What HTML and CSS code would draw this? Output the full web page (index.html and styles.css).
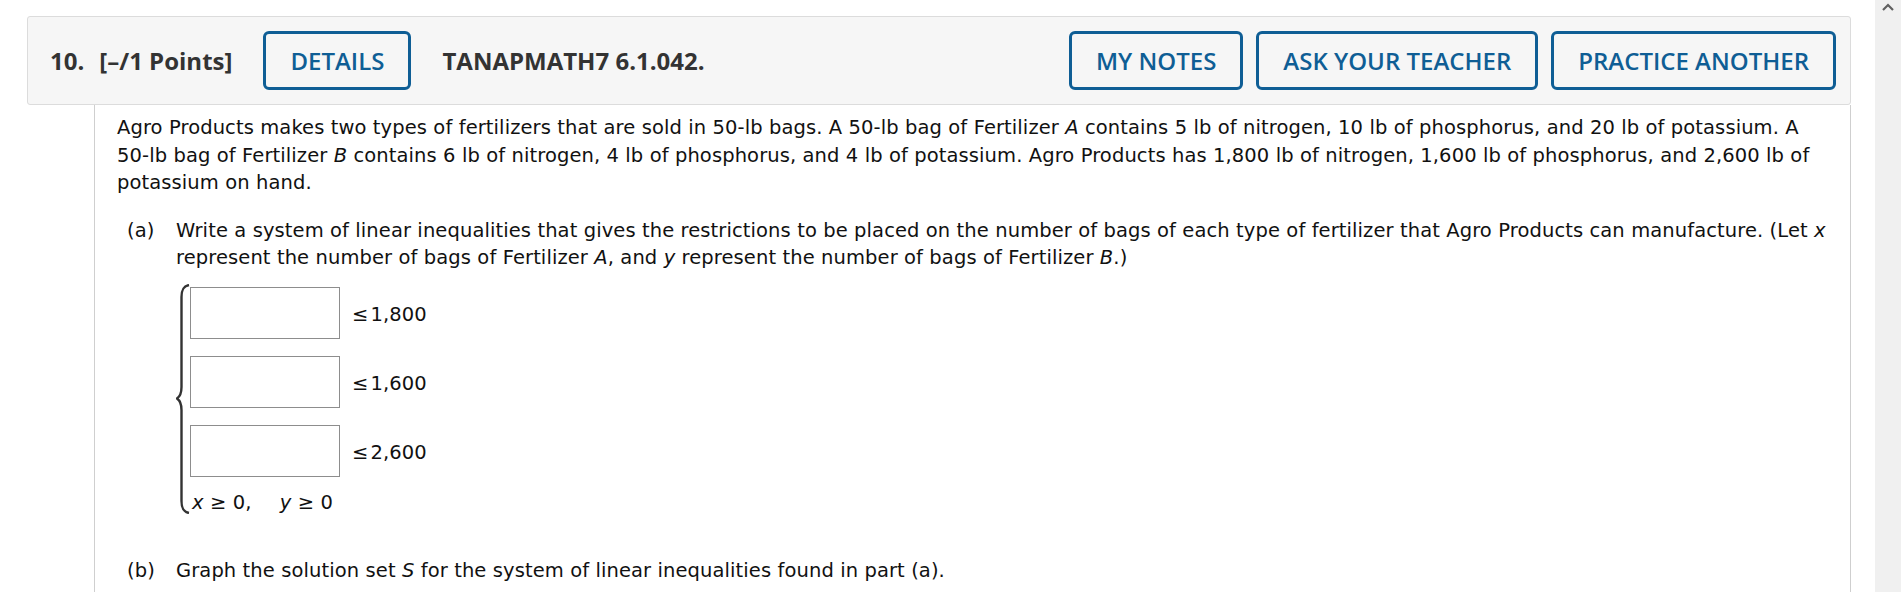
FILE: index.html
```html
<!DOCTYPE html>
<html lang="en">

<head>
    <meta charset="UTF-8">
    <meta name="viewport" content="width=device-width, initial-scale=1.0">
    <title>Question 10</title>
    <link rel="stylesheet" href="styles.css">
</head>

<body>
    <div class="page">
        <div class="qhead">
            <span class="qnum">10.</span>
            <span class="points">[&ndash;/1 Points]</span>
            <button class="qbtn details">DETAILS</button>
            <span class="qcode">TANAPMATH7 6.1.042.</span>
            <div class="qtools">
                <button class="qbtn">MY NOTES</button>
                <button class="qbtn">ASK YOUR TEACHER</button>
                <button class="qbtn">PRACTICE ANOTHER</button>
            </div>
        </div>

        <div class="qbody">
            <p class="intro">Agro Products makes two types of fertilizers that are sold in 50-lb bags. A 50-lb bag of Fertilizer <i>A</i> contains 5 lb of nitrogen, 10 lb of phosphorus, and 20 lb of potassium. A 50-lb bag of Fertilizer <i>B</i> contains 6 lb of nitrogen, 4 lb of phosphorus, and 4 lb of potassium. Agro Products has 1,800 lb of nitrogen, 1,600 lb of phosphorus, and 2,600 lb of potassium on hand.</p>

            <div class="part">
                <span class="plabel">(a)</span>
                <div class="ptext">
                    <p>Write a system of linear inequalities that gives the restrictions to be placed on the number of bags of each type of fertilizer that Agro Products can manufacture. (Let <i>x</i> represent the number of bags of Fertilizer <i>A</i>, and <i>y</i> represent the number of bags of Fertilizer <i>B</i>.)</p>

                    <div class="system">
                        <svg class="brace" viewBox="0 0 14 230" preserveAspectRatio="none">
                            <path d="M13,1 C8,2 5.5,5 5.5,13 L5.5,103 C5.5,109 4,112.5 1,114.5 C4,116.5 5.5,120 5.5,126 L5.5,217 C5.5,225 8,228 13,229" />
                        </svg>
                        <div class="rows">
                            <div class="ineq"><input type="text"><span>&le;&#8202;1,800</span></div>
                            <div class="ineq"><input type="text"><span>&le;&#8202;1,600</span></div>
                            <div class="ineq"><input type="text"><span>&le;&#8202;2,600</span></div>
                            <div class="bounds"><i>x</i> &ge; 0, <span class="ybound"><i>y</i> &ge; 0</span></div>
                        </div>
                    </div>
                </div>
            </div>

            <div class="part partb">
                <span class="plabel">(b)</span>
                <div class="ptext">
                    <p>Graph the solution set <i>S</i> for the system of linear inequalities found in part (a).</p>
                </div>
            </div>
        </div>
    </div>

    <div class="scrollbar">
        <svg class="caret" viewBox="0 0 12 8"><polyline points="1,7 6,2 11,7" /></svg>
    </div>
</body>

</html>
```

FILE: styles.css
```css
body {
    margin: 0;
    height: 100vh;
    overflow: hidden;
    display: flex;
    background-color: white;
}

.page {
    flex: 1;
    padding: 16px 24px 0 27px;
}

/* question header bar */
.qhead {
    display: flex;
    align-items: center;
    height: 87px;
    padding: 0 14px 0 22px;
    background-color: #f6f6f6;
    border: 1px solid #dcdcdc;
    border-radius: 3px;
    font-family: "Open Sans", sans-serif;
    font-size: 24px;
    color: #333;
}

.qnum,
.points,
.qcode {
    font-weight: 700;
}

.qnum {
    margin-right: 15px;
}

.qbtn {
    height: 59px;
    padding: 0 24px;
    border: 3px solid #0f5e95;
    border-radius: 6px;
    background-color: transparent;
    font-family: "Open Sans", sans-serif;
    font-size: 24px;
    font-weight: 600;
    color: #0f5e95;
}

.details {
    margin: 0 31px;
}

.qtools {
    margin-left: auto;
    display: flex;
    gap: 13px;
}

/* question body */
.qbody {
    margin-left: 67px;
    padding: 9px 0 60px 22px;
    border-left: 1px solid #cfcfcf;
    border-right: 1px solid #cfcfcf;
    font-family: "DejaVu Sans", Verdana, sans-serif;
    font-size: 19.5px;
    letter-spacing: 0.1px;
    line-height: 27.5px;
    color: #111;
}

.qbody p {
    margin: 0;
}

.qbody .intro {
    padding-right: 30px;
}

.part {
    display: flex;
    margin-top: 20px;
    padding-left: 10px;
}

.plabel {
    flex: 0 0 49px;
}

.ptext {
    flex: 1;
}

.system {
    display: flex;
    margin-top: 11px;
}

.brace {
    width: 14px;
    height: 230px;
    margin-top: 1px;
}

.brace path {
    fill: none;
    stroke: #333;
    stroke-width: 2.4;
}

.rows {
    display: flex;
    flex-direction: column;
    padding-top: 4px;
}

.ineq {
    display: flex;
    align-items: center;
    gap: 12px;
    margin-bottom: 17px;
}

.ineq input {
    width: 150px;
    height: 52px;
    box-sizing: border-box;
    margin: 0;
    border: 1px solid #8d8d8d;
    background-color: white;
}

.ineq span {
    padding-top: 5px;
}

.bounds {
    margin-top: -5px;
    padding-left: 2px;
}

.ybound {
    margin-left: 22px;
}

.partb {
    margin-top: 41px;
}

/* fake window scrollbar */
.scrollbar {
    width: 26px;
    background-color: #f0f0f0;
}

.caret {
    display: block;
    width: 12px;
    height: 8px;
    margin: 3px 0 0 7px;
}

.caret polyline {
    fill: none;
    stroke: #606060;
    stroke-width: 2.2;
}
```
